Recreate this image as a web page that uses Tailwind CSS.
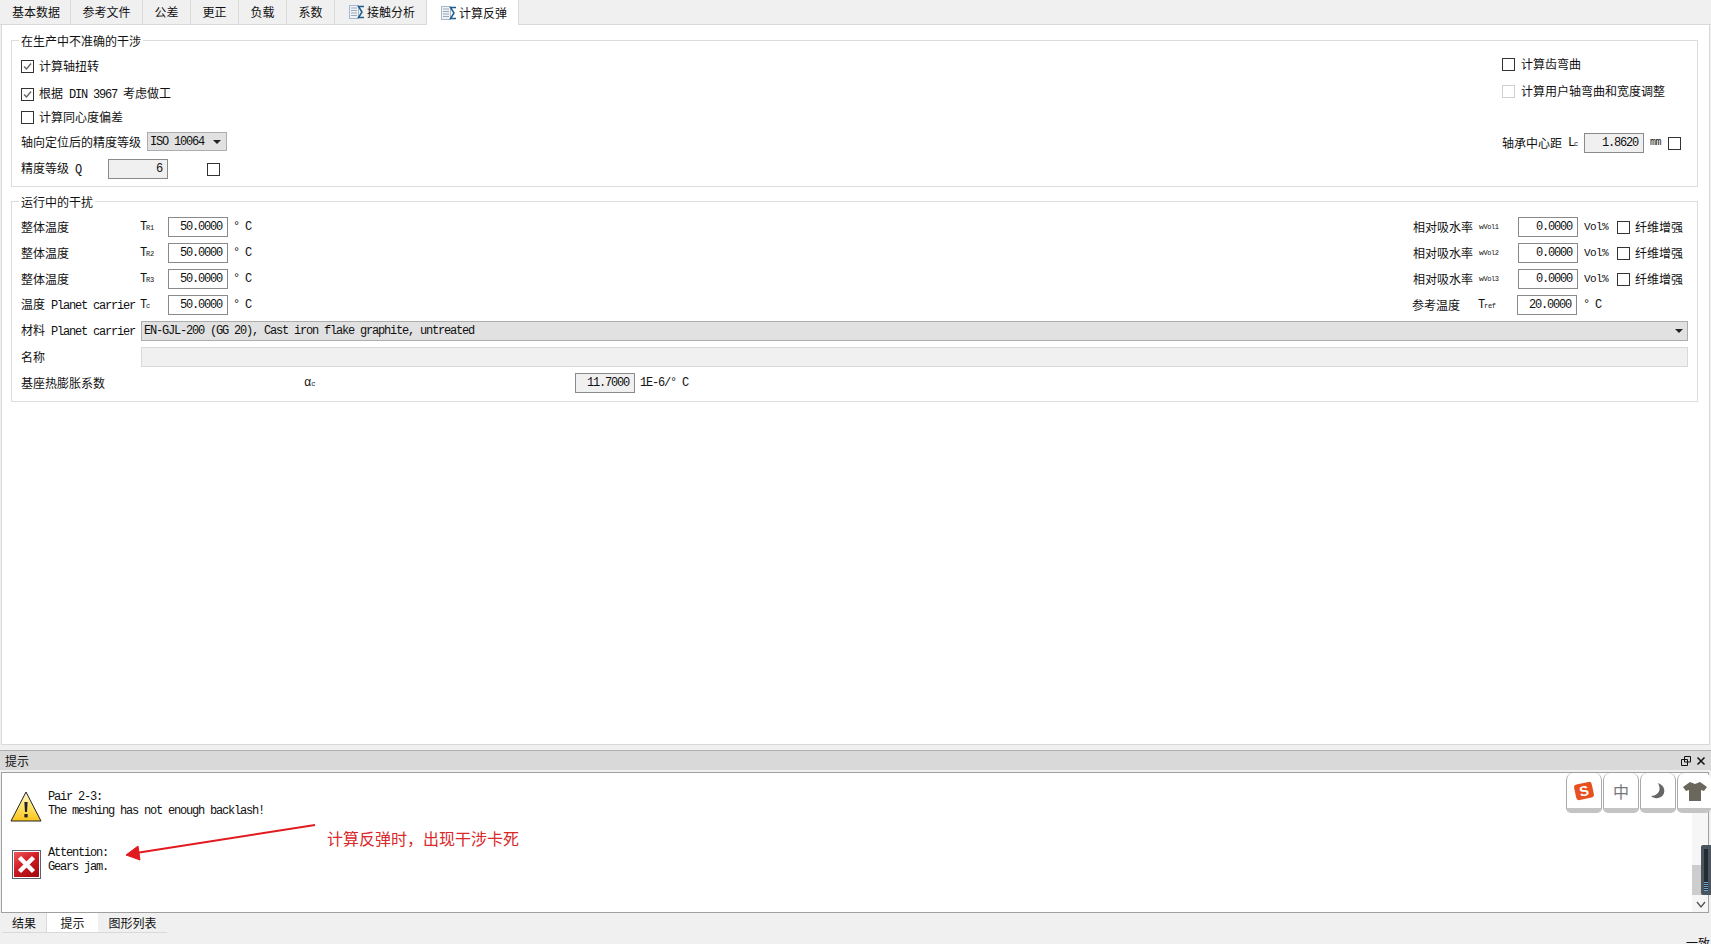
<!DOCTYPE html>
<html><head><meta charset="utf-8">
<script src="https://cdn.jsdelivr.net/npm/@tailwindcss/browser@4"></script>
</head>
<body class="bg-[#f0f0f0]">
<div class="relative w-[1711px] h-[944px] overflow-hidden flex flex-col text-[12px] leading-[14px] text-[#111] font-['Noto_Sans_CJK_SC',sans-serif]">

<!-- tabs -->
<div class="h-[25px] flex pl-[2px] items-start border-b border-[#d9d9d9]">
  <div class="h-[24px] w-[69px] flex items-center justify-center border-r border-[#d9d9d9]">基本数据</div>
  <div class="h-[24px] w-[72px] flex items-center justify-center border-r border-[#d9d9d9]">参考文件</div>
  <div class="h-[24px] w-[48px] flex items-center justify-center border-r border-[#d9d9d9]">公差</div>
  <div class="h-[24px] w-[48px] flex items-center justify-center border-r border-[#d9d9d9]">更正</div>
  <div class="h-[24px] w-[48px] flex items-center justify-center border-r border-[#d9d9d9]">负载</div>
  <div class="h-[24px] w-[48px] flex items-center justify-center border-r border-[#d9d9d9]">系数</div>
  <div class="h-[24px] w-[92px] flex items-center justify-center gap-[2px] pl-[3px] border-r border-[#d9d9d9]">
    <svg class="w-[16px] h-[16px]" viewBox="0 0 16 16"><rect x=".5" y="1.5" width="9" height="13" fill="#eef2f7" stroke="#a9b8ca"/><path d="M2 4h6M2 6.5h6M2 9h6M2 11.5h6" stroke="#9aa9bc"/><path d="M15 2.5H9.5L13 8l-3.5 5.5H15" fill="none" stroke="#1d5c8c" stroke-width="1.5"/></svg>
    <span>接触分析</span>
  </div>
  <div class="h-[25px] -mb-px w-[92px] flex items-center justify-center gap-[2px] pl-[3px] bg-white border-r border-[#d9d9d9] relative">
    <svg class="w-[16px] h-[16px]" viewBox="0 0 16 16"><rect x=".5" y="1.5" width="9" height="13" fill="#eef2f7" stroke="#a9b8ca"/><path d="M2 4h6M2 6.5h6M2 9h6M2 11.5h6" stroke="#9aa9bc"/><path d="M15 2.5H9.5L13 8l-3.5 5.5H15" fill="none" stroke="#1d5c8c" stroke-width="1.5"/></svg>
    <span>计算反弹</span>
  </div>
</div>

<!-- main panel -->
<div class="h-[720px] mx-px bg-white border border-t-0 border-[#d9d9d9] pl-[9px] pr-[9px] pt-[15px] flex flex-col gap-[14px]">
  <!-- group 1 -->
  <div class="relative h-[147px] w-[1687px] border border-[#dcdcdc] flex justify-between pl-[9px] pr-[16px]">
    <span class="absolute left-[7px] -top-[7px] px-[2px] bg-white">在生产中不准确的干涉</span>
    <div class="pt-[17px] flex flex-col">
      <div class="h-[16px] flex items-center gap-[5px]">
        <span class="w-[13px] h-[13px] border border-[#333] flex items-center justify-center"><svg class="w-[11px] h-[11px]" viewBox="0 0 11 11"><path d="M2 5.5l2.5 2.5L9 2.5" fill="none" stroke="#666" stroke-width="1.4"/></svg></span>
        <span>计算轴扭转</span>
      </div>
      <div class="h-[16px] mt-[12px] flex items-center gap-[5px]">
        <span class="w-[13px] h-[13px] border border-[#333] flex items-center justify-center"><svg class="w-[11px] h-[11px]" viewBox="0 0 11 11"><path d="M2 5.5l2.5 2.5L9 2.5" fill="none" stroke="#666" stroke-width="1.4"/></svg></span>
        <span>根据<span class="font-['Liberation_Mono'] tracking-[-1.2px] whitespace-pre"> DIN 3967 </span>考虑做工</span>
      </div>
      <div class="h-[16px] mt-[7px] flex items-center gap-[5px]">
        <span class="w-[13px] h-[13px] border border-[#333]"></span>
        <span>计算同心度偏差</span>
      </div>
      <div class="h-[19px] mt-[7px] flex items-center gap-[6px]">
        <span>轴向定位后的精度等级</span>
        <div class="w-[80px] h-[19px] bg-[#e1e1e1] border border-[#adadad] flex items-center justify-between pl-[2px] pr-[5px] font-['Liberation_Mono'] tracking-[-1.2px]">
          <span>ISO 10064</span>
          <span class="w-0 h-0 border-x-[4px] border-x-transparent border-t-[4px] border-t-[#222]"></span>
        </div>
      </div>
      <div class="h-[20px] mt-[8px] flex items-center">
        <span class="w-[87px]">精度等级<span class="font-['Liberation_Mono'] tracking-[-1.2px] whitespace-pre"> Q</span></span>
        <div class="w-[60px] h-[20px] bg-[#f0f0f0] border border-[#8a8a8a] flex items-center justify-end pr-[5px] font-['Liberation_Mono'] tracking-[-1.2px]">6</div>
        <span class="ml-[39px] w-[13px] h-[13px] border border-[#333]"></span>
      </div>
    </div>
    <div class="pt-[15px] flex flex-col">
      <div class="h-[16px] flex items-center gap-[6px]">
        <span class="w-[13px] h-[13px] border border-[#333]"></span>
        <span>计算齿弯曲</span>
      </div>
      <div class="h-[16px] mt-[11px] flex items-center gap-[6px]">
        <span class="w-[13px] h-[13px] border border-[#d0d0d0]"></span>
        <span>计算用户轴弯曲和宽度调整</span>
      </div>
      <div class="h-[20px] mt-[34px] flex items-center">
        <span>轴承中心距</span>
        <span class="ml-[6px] w-[16px] font-['Liberation_Mono'] tracking-[-1.2px]">L<sub class="text-[7px] bottom-0 tracking-[-0.3px]">c</sub></span>
        <div class="w-[60px] h-[20px] bg-[#f0f0f0] border border-[#8a8a8a] flex items-center justify-end pr-[5px] font-['Liberation_Mono'] tracking-[-1.2px]">1.8620</div>
        <span class="ml-[6px] w-[18px] font-['Liberation_Mono'] text-[10px] tracking-[-0.6px]">mm</span>
        <span class="w-[13px] h-[13px] border border-[#333]"></span>
      </div>
    </div>
  </div>

  <!-- group 2 -->
  <div class="relative h-[201px] w-[1687px] border border-[#dcdcdc] pl-[9px] pr-[9px] pt-[15px] flex flex-col">
    <span class="absolute left-[7px] -top-[7px] px-[2px] bg-white">运行中的干扰</span>
    <div class="flex justify-between h-[20px] items-center mb-[6px]">
      <div class="flex items-center">
        <span class="w-[119px]">整体温度</span>
        <span class="w-[28px] font-['Liberation_Mono'] tracking-[-1.2px]">T<sub class="text-[7px] bottom-0 tracking-[-0.3px]">R1</sub></span>
        <div class="w-[60px] h-[20px] bg-white border border-[#8a8a8a] flex items-center justify-end pr-[5px] font-['Liberation_Mono'] tracking-[-1.2px]">50.0000</div>
        <span class="ml-[5px] font-['Liberation_Mono'] tracking-[-1.2px]">° C</span>
      </div>
      <div class="flex items-center mr-[5px]">
        <span class="w-[66px]">相对吸水率</span>
        <span class="w-[39px] font-['Liberation_Mono'] text-[8px] tracking-[-0.4px]">w<sub class="text-[7px] bottom-0">Vol1</sub></span>
        <div class="w-[60px] h-[20px] bg-white border border-[#8a8a8a] flex items-center justify-end pr-[5px] font-['Liberation_Mono'] tracking-[-1.2px]">0.0000</div>
        <span class="ml-[6px] w-[33px] font-['Liberation_Mono'] text-[11px] tracking-[-0.6px]">Vol%</span>
        <span class="w-[13px] h-[13px] border border-[#333]"></span>
        <span class="ml-[5px]">纤维增强</span>
      </div>
    </div>
    <div class="flex justify-between h-[20px] items-center mb-[6px]">
      <div class="flex items-center">
        <span class="w-[119px]">整体温度</span>
        <span class="w-[28px] font-['Liberation_Mono'] tracking-[-1.2px]">T<sub class="text-[7px] bottom-0 tracking-[-0.3px]">R2</sub></span>
        <div class="w-[60px] h-[20px] bg-white border border-[#8a8a8a] flex items-center justify-end pr-[5px] font-['Liberation_Mono'] tracking-[-1.2px]">50.0000</div>
        <span class="ml-[5px] font-['Liberation_Mono'] tracking-[-1.2px]">° C</span>
      </div>
      <div class="flex items-center mr-[5px]">
        <span class="w-[66px]">相对吸水率</span>
        <span class="w-[39px] font-['Liberation_Mono'] text-[8px] tracking-[-0.4px]">w<sub class="text-[7px] bottom-0">Vol2</sub></span>
        <div class="w-[60px] h-[20px] bg-white border border-[#8a8a8a] flex items-center justify-end pr-[5px] font-['Liberation_Mono'] tracking-[-1.2px]">0.0000</div>
        <span class="ml-[6px] w-[33px] font-['Liberation_Mono'] text-[11px] tracking-[-0.6px]">Vol%</span>
        <span class="w-[13px] h-[13px] border border-[#333]"></span>
        <span class="ml-[5px]">纤维增强</span>
      </div>
    </div>
    <div class="flex justify-between h-[20px] items-center mb-[6px]">
      <div class="flex items-center">
        <span class="w-[119px]">整体温度</span>
        <span class="w-[28px] font-['Liberation_Mono'] tracking-[-1.2px]">T<sub class="text-[7px] bottom-0 tracking-[-0.3px]">R3</sub></span>
        <div class="w-[60px] h-[20px] bg-white border border-[#8a8a8a] flex items-center justify-end pr-[5px] font-['Liberation_Mono'] tracking-[-1.2px]">50.0000</div>
        <span class="ml-[5px] font-['Liberation_Mono'] tracking-[-1.2px]">° C</span>
      </div>
      <div class="flex items-center mr-[5px]">
        <span class="w-[66px]">相对吸水率</span>
        <span class="w-[39px] font-['Liberation_Mono'] text-[8px] tracking-[-0.4px]">w<sub class="text-[7px] bottom-0">Vol3</sub></span>
        <div class="w-[60px] h-[20px] bg-white border border-[#8a8a8a] flex items-center justify-end pr-[5px] font-['Liberation_Mono'] tracking-[-1.2px]">0.0000</div>
        <span class="ml-[6px] w-[33px] font-['Liberation_Mono'] text-[11px] tracking-[-0.6px]">Vol%</span>
        <span class="w-[13px] h-[13px] border border-[#333]"></span>
        <span class="ml-[5px]">纤维增强</span>
      </div>
    </div>
    <div class="flex justify-between h-[20px] items-center mb-[6px]">
      <div class="flex items-center">
        <span class="w-[119px] whitespace-nowrap">温度<span class="font-['Liberation_Mono'] tracking-[-1.2px] whitespace-pre"> Planet carrier</span></span>
        <span class="w-[28px] font-['Liberation_Mono'] tracking-[-1.2px]">T<sub class="text-[7px] bottom-0 tracking-[-0.3px]">c</sub></span>
        <div class="w-[60px] h-[20px] bg-white border border-[#8a8a8a] flex items-center justify-end pr-[5px] font-['Liberation_Mono'] tracking-[-1.2px]">50.0000</div>
        <span class="ml-[5px] font-['Liberation_Mono'] tracking-[-1.2px]">° C</span>
      </div>
      <div class="flex items-center mr-[79px]">
        <span class="w-[66px]">参考温度</span>
        <span class="w-[39px] font-['Liberation_Mono'] tracking-[-1.2px]">T<sub class="text-[7px] bottom-0 tracking-[-0.3px]">ref</sub></span>
        <div class="w-[60px] h-[20px] bg-white border border-[#8a8a8a] flex items-center justify-end pr-[5px] font-['Liberation_Mono'] tracking-[-1.2px]">20.0000</div>
        <span class="ml-[6px] w-[26px] font-['Liberation_Mono'] tracking-[-1.2px]">° C</span>
      </div>
    </div>
    <div class="flex h-[20px] items-center mb-[6px]">
      <span class="w-[120px] shrink-0 whitespace-nowrap">材料<span class="font-['Liberation_Mono'] tracking-[-1.2px] whitespace-pre"> Planet carrier</span></span>
      <div class="flex-1 h-[20px] bg-[#e1e1e1] border border-[#adadad] flex items-center justify-between pl-[2px] pr-[4px] font-['Liberation_Mono'] tracking-[-1.2px]">
        <span>EN-GJL-200 (GG 20), Cast iron flake graphite, untreated</span>
        <span class="w-0 h-0 border-x-[4px] border-x-transparent border-t-[4px] border-t-[#222]"></span>
      </div>
    </div>
    <div class="flex h-[20px] items-center mb-[6px]">
      <span class="w-[120px] shrink-0">名称</span>
      <div class="flex-1 h-[20px] bg-[#f0f0f0] border border-[#d9d9d9]"></div>
    </div>
    <div class="flex h-[20px] items-center">
      <span class="w-[283px] shrink-0">基座热膨胀系数</span>
      <span class="w-[271px] font-['Liberation_Mono'] text-[12px]">α<sub class="text-[7px] bottom-0">c</sub></span>
      <div class="w-[60px] h-[20px] bg-[#f0f0f0] border border-[#8a8a8a] flex items-center justify-end pr-[5px] font-['Liberation_Mono'] tracking-[-1.2px]">11.7000</div>
      <span class="ml-[5px] font-['Liberation_Mono'] tracking-[-1.2px]">1E-6/° C</span>
    </div>
  </div>
</div>

<!-- dock title -->
<div class="h-[20px] mt-[5px] bg-[#d9d9d9] border-t border-[#b0b0b0] flex items-center justify-between pl-[5px] pr-[5px]">
  <span>提示</span>
  <div class="flex items-center gap-[5px]">
    <svg class="w-[10px] h-[10px]" viewBox="0 0 10 10"><path d="M3.5 .5h6v5.5h-6zM.5 3.5h6v6h-6z" fill="#d9d9d9" stroke="#111"/></svg>
    <svg class="w-[10px] h-[10px]" viewBox="0 0 10 10"><path d="M1.5 1.5l7 7M8.5 1.5l-7 7" stroke="#111" stroke-width="1.5"/></svg>
  </div>
</div>

<!-- dock content -->
<div class="h-[141px] mt-[2px] ml-px mr-[2px] bg-white border border-[#a0a0a0] pl-[8px] pt-[17px] font-['Liberation_Mono'] tracking-[-1.2px] flex flex-col gap-[23px] relative">
  <div class="flex items-center gap-[6px]">
    <svg class="w-[32px] h-[31px]" viewBox="0 0 32 31"><defs><linearGradient id="wy" x1="0" y1="0" x2="0" y2="1"><stop offset="0" stop-color="#fff8d8"/><stop offset="0.55" stop-color="#ffe066"/><stop offset="1" stop-color="#fcc419"/></linearGradient></defs><path d="M16 1L1 30h30z" fill="url(#wy)" stroke="#222" stroke-width="1"/><path d="M14.4 11h3.2l-.6 10h-2z" fill="#222"/><rect x="14.4" y="23" width="3.2" height="3.4" fill="#222"/></svg>
    <div class="leading-[14px] mb-[5px]"><div>Pair 2-3:</div><div>The meshing has not enough backlash!</div></div>
  </div>
  <div class="flex items-center gap-[7px] pl-[2px]">
    <svg class="w-[29px] h-[29px]" viewBox="0 0 29 29"><defs><linearGradient id="er" x1="0" y1="0" x2="0.7" y2="1"><stop offset="0" stop-color="#ee5a5f"/><stop offset="0.5" stop-color="#d01c24"/><stop offset="1" stop-color="#a80a12"/></linearGradient></defs><rect x=".5" y=".5" width="28" height="28" fill="#fff" stroke="#5a6070"/><rect x="2" y="2" width="25" height="25" fill="url(#er)"/><path d="M7.5 7.5l14 14M21.5 7.5l-14 14" stroke="#fff" stroke-width="4.5"/></svg>
    <div class="leading-[14px] mb-[9px]"><div>Attention:</div><div>Gears jam.</div></div>
  </div>

  <!-- annotation -->
  <svg class="absolute left-0 top-0 w-[540px] h-[139px] pointer-events-none" viewBox="0 0 540 139"><path d="M313 52L134 80" stroke="#e11a1f" stroke-width="2"/><path d="M124 82l12-9 2 14z" fill="#e11a1f" stroke="#e11a1f"/></svg>
  <span class="absolute left-[325px] top-[55px] text-[16px] leading-[20px] tracking-normal text-[#d9292b] font-['Noto_Sans_CJK_SC']">计算反弹时，出现干涉卡死</span>

  <!-- scrollbar -->
  <div class="absolute right-0 top-0 bottom-0 w-[16px] bg-[#f0f0f0]/60 flex flex-col justify-end">
    <div class="h-[30px] bg-[#cdcdcd] mb-[17px]"></div>
  </div>
  <svg class="absolute right-[2px] bottom-[3px] w-[10px] h-[8px]" viewBox="0 0 10 8"><path d="M1 1l4 5 4-5" fill="none" stroke="#555" stroke-width="1.4"/></svg>
</div>

<!-- bottom tabs -->
<div class="h-[31px] flex items-start pl-[2px] relative">
  <div class="h-[20px] w-[45px] flex items-center justify-center border-b border-r border-[#d9d9d9]">结果</div>
  <div class="h-[20px] w-[51px] flex items-center justify-center bg-white border-b border-[#d9d9d9]">提示</div>
  <div class="h-[20px] w-[69px] flex items-center justify-center border-b border-[#d9d9d9]">图形列表</div>
  <span class="absolute right-[1px] -bottom-[5px] text-[12px] leading-[12px]">一致</span>
</div>

<!-- IME toolbar floating over the window -->
<div class="absolute right-0 top-[773px] flex gap-[1px]">
  <div class="w-[36px] h-[40px] bg-white rounded-b-[5px] rounded-t-[7px] border-x border-[#aaa] border-b-[5px] border-b-[#c4c4c4] flex items-center justify-center"><span class="w-[18px] h-[16px] rounded-[3px] bg-[#e8501f] text-white text-[14px] leading-[16px] font-bold text-center font-['Liberation_Sans'] -rotate-12">S</span></div>
  <div class="w-[36px] h-[40px] bg-white rounded-b-[5px] rounded-t-[7px] border-x border-[#aaa] border-b-[5px] border-b-[#c4c4c4] flex items-center justify-center text-[16px] text-[#777] font-['Noto_Sans_CJK_SC']">中</div>
  <div class="w-[36px] h-[40px] bg-white rounded-b-[5px] rounded-t-[7px] border-x border-[#aaa] border-b-[5px] border-b-[#c4c4c4] flex items-center justify-center"><svg class="w-[18px] h-[18px]" viewBox="0 0 18 18"><path d="M9 1C15 3 17 9 14 13C11 17 5 17 2 14C7 14 10 11 10.5 7.5C10.7 5 10 3 9 1z" fill="#666"/></svg></div>
  <div class="w-[34px] h-[40px] bg-white rounded-b-[5px] rounded-t-[7px] border-l border-[#aaa] border-b-[5px] border-b-[#c4c4c4] flex items-center justify-center"><svg class="w-[26px] h-[20px]" viewBox="0 0 26 20"><path d="M8 1l5 2 5-2 7 5-3 4-3-1v11H7V9l-3 1-3-4z" fill="#6b675c"/></svg></div>
</div>

<!-- floating widget at the right edge -->
<div class="absolute right-0 top-[845px] w-[10px] h-[50px] bg-[#4a5560] rounded-l-[2px] py-[4px] flex justify-center">
  <div class="w-[4px] h-full bg-[#232a30] flex flex-col justify-end gap-[1px]">
    <span class="h-[1px] bg-[#6fa8d0]"></span><span class="h-[1px] bg-[#6fa8d0]"></span><span class="h-[1px] bg-[#6fa8d0]"></span><span class="h-[1px] bg-[#6fa8d0]"></span><span class="h-[1px] bg-[#6fa8d0]"></span>
  </div>
</div>
</div>
</body></html>
